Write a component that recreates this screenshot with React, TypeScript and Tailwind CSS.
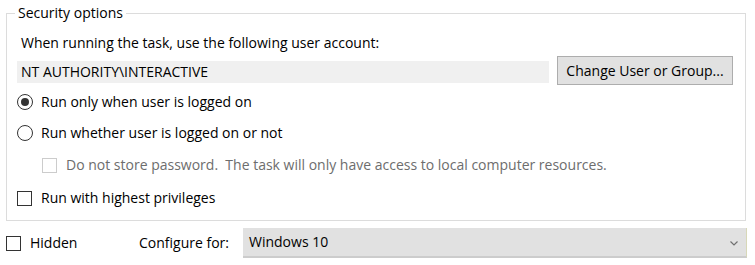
import React from "react";

// Task properties – "Security options" group, classic Win32 dialog look.

function Radio({ checked }: { checked?: boolean }) {
  return (
    <span className="flex h-[16px] w-[16px] items-center justify-center rounded-full border border-[#333333] bg-white">
      {checked ? <span className="h-[8px] w-[8px] rounded-full bg-[#333333]" /> : null}
    </span>
  );
}

function Check({ disabled }: { disabled?: boolean }) {
  return (
    <span
      className={
        disabled
          ? "block h-[15px] w-[15px] border border-[#cccccc] bg-white"
          : "block h-[15px] w-[15px] border border-[#333333] bg-white"
      }
    />
  );
}

export default function App() {
  return (
    <div className="h-[265px] w-[755px] bg-white text-[14px] leading-[20px] text-black [font-family:'Open_Sans',sans-serif]">
      <fieldset className="ml-[6px] mr-[9px] mt-[3px] h-[218px] border border-[#dcdcdc] pl-[10px] pr-[12px]">
        <legend className="ml-[-2px] px-[3px]">Security options</legend>

        <div className="mt-[10px] pl-[4px]">When running the task, use the following user account:</div>

        <div className="mt-[3px] flex items-start gap-[8px]">
          <div className="mt-[5px] flex h-[22px] w-[532px] items-center bg-[#f0f0f0] pl-[4px]">
            NT AUTHORITY\INTERACTIVE
          </div>
          <button className="h-[29px] w-[176px] border border-[#adadad] bg-[#e1e1e1] text-center">
            Change User or Group...
          </button>
        </div>

        <div className="mt-[7px] flex h-[20px] items-center gap-[8px]">
          <Radio checked />
          <span>Run only when user is logged on</span>
        </div>

        <div className="mt-[11px] flex h-[20px] items-center gap-[8px]">
          <Radio />
          <span>Run whether user is logged on or not</span>
        </div>

        <div className="mt-[12px] flex h-[20px] items-center gap-[9px] pl-[25px] text-[#6d6d6d]">
          <Check disabled />
          <span>Do not store password.&nbsp; The task will only have access to local computer resources.</span>
        </div>

        <div className="mt-[13px] flex h-[20px] items-center gap-[9px]">
          <Check />
          <span>Run with highest privileges</span>
        </div>
      </fieldset>

      <div className="mt-[7px] flex h-[30px] items-center">
        <div className="ml-[6px] flex w-[133px] items-center gap-[9px]">
          <Check />
          <span>Hidden</span>
        </div>
        <span className="w-[104px]">Configure for:</span>
        <div className="flex h-[30px] w-[504px] items-center justify-between border-b-2 border-r border-b-[#cccccc] border-r-[#d8d8b8] bg-[#e1e1e1] pl-[6px] pr-[8px]">
          <span>Windows 10</span>
          <svg width="8" height="5" viewBox="0 0 8 5" className="mt-[2px]">
            <path d="M0.5 0.5l3.5 3.5 3.5-3.5" fill="none" stroke="#707070" strokeWidth="1.2" />
          </svg>
        </div>
      </div>
    </div>
  );
}
